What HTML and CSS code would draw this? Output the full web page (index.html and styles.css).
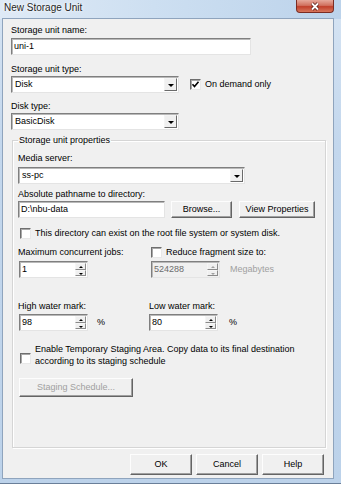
FILE: index.html
```html
<!DOCTYPE html>
<html>
<head>
    <title>New Storage Unit</title>
    <link rel="stylesheet" href="styles.css">
</head>
<body>
    <div class="window">
        <div class="titlebar">
            <span class="title">New Storage Unit</span>
            <span class="close-btn">
                <svg width="12" height="9" viewBox="0 0 12 9"><path class="x-shadow" d="M3 1.5 L9 7.5 M9 1.5 L3 7.5"/><path class="x-mark" d="M3 1.5 L9 7.5 M9 1.5 L3 7.5"/></svg>
            </span>
        </div>
        <div class="client">
            <div class="label">Storage unit name:</div>
            <div class="textbox name-box">uni-1</div>

            <div class="label label-gap">Storage unit type:</div>
            <div class="row field">
                <div class="combo short-combo"><span class="combo-text">Disk</span><span class="drop"></span></div>
                <div class="check demand-check">
                    <span class="box"><svg width="9" height="9" viewBox="0 0 9 9"><path d="M1.5 4.2 L3.5 6.5 L7.5 1.8"/></svg></span>
                    <span>On demand only</span>
                </div>
            </div>

            <div class="label label-gap2">Disk type:</div>
            <div class="combo short-combo field"><span class="combo-text">BasicDisk</span><span class="drop"></span></div>

            <fieldset class="group">
                <legend>Storage unit properties</legend>

                <div class="label">Media server:</div>
                <div class="combo server-combo"><span class="combo-text">ss-pc</span><span class="drop"></span></div>

                <div class="label path-label">Absolute pathname to directory:</div>
                <div class="row field">
                    <div class="textbox path-box">D:\nbu-data</div>
                    <div class="button browse-btn">Browse...</div>
                    <div class="button props-btn">View Properties</div>
                </div>

                <div class="check root-check">
                    <span class="box"></span>
                    <span>This directory can exist on the root file system or system disk.</span>
                </div>

                <div class="pair jobs-pair">
                    <div>
                        <div class="label">Maximum concurrent jobs:</div>
                        <div class="spin spin-gap">
                            <span class="spin-text">1</span>
                            <span class="spin-btns"><span class="spin-up"></span><span class="spin-down"></span></span>
                        </div>
                    </div>
                    <div>
                        <div class="check fragment-check">
                            <span class="box"></span>
                            <span>Reduce fragment size to:</span>
                        </div>
                        <div class="row spin-gap">
                            <div class="spin disabled">
                                <span class="spin-text">524288</span>
                                <span class="spin-btns"><span class="spin-up"></span><span class="spin-down"></span></span>
                            </div>
                            <span class="unit muted">Megabytes</span>
                        </div>
                    </div>
                </div>

                <div class="pair water-pair">
                    <div>
                        <div class="label">High water mark:</div>
                        <div class="row water-gap">
                            <div class="spin">
                                <span class="spin-text">98</span>
                                <span class="spin-btns"><span class="spin-up"></span><span class="spin-down"></span></span>
                            </div>
                            <span class="unit high-unit">%</span>
                        </div>
                    </div>
                    <div>
                        <div class="label">Low water mark:</div>
                        <div class="row water-gap">
                            <div class="spin low-spin">
                                <span class="spin-text">80</span>
                                <span class="spin-btns"><span class="spin-up"></span><span class="spin-down"></span></span>
                            </div>
                            <span class="unit low-unit">%</span>
                        </div>
                    </div>
                </div>

                <div class="check staging-check">
                    <span class="box"></span>
                    <span>Enable Temporary Staging Area. Copy data to its final destination<br>according to its staging schedule</span>
                </div>

                <div class="button staging-btn disabled">Staging Schedule...</div>
            </fieldset>

            <div class="actions">
                <div class="button action-btn">OK</div>
                <div class="button action-btn">Cancel</div>
                <div class="button action-btn">Help</div>
            </div>
        </div>
    </div>
</body>
</html>
```

FILE: styles.css
```css
body {
    margin: 0;
    font-family: "Liberation Sans", Arial, sans-serif;
    font-size: 9px;
    color: #000;
    background: #fff;
}
.window {
    width: 341px;
    height: 484px;
    display: flex;
    flex-direction: column;
    background: linear-gradient(to bottom, #d6e4f3, #c3d7ed 30%, #bcd2ea);
    box-shadow: inset 0 -3px 0 -2px #6a7f99;
}
.titlebar {
    height: 19px;
    flex: none;
    display: flex;
    justify-content: space-between;
    align-items: flex-start;
    padding-left: 4px;
    background: linear-gradient(to right, #dfeaf6, #cddff1 45%, #bcd3eb);
}
.title {
    font-size: 10px;
    line-height: 15px;
    color: #1e1e1e;
    text-shadow: 0 0 4px #fff, 0 0 2px #fff;
}
.close-btn {
    width: 38px;
    height: 13px;
    margin-right: 7px;
    box-sizing: border-box;
    border: 1px solid #7b2c22;
    border-top: none;
    border-radius: 0 0 4px 4px;
    background: linear-gradient(to bottom, #e6a99b, #d1715f 45%, #c1402b 55%, #d7765c);
    display: flex;
    align-items: center;
    justify-content: center;
}
.close-btn svg { display: block; }
.x-shadow { stroke: #5a2018; stroke-width: 3.4; fill: none; }
.x-mark { stroke: #fff; stroke-width: 1.8; fill: none; }
.client {
    flex: 1;
    margin: 0 8px 6px 3px;
    padding: 6px 7px 3px 8px;
    background: #f0f0f0;
    box-shadow: 0 0 0 1px #8fa4bd;
    display: flex;
    flex-direction: column;
    align-items: flex-start;
}
.label {
    line-height: 11px;
    white-space: nowrap;
}
.label-gap { margin-top: 9px; }
.label-gap2 { margin-top: 8px; }
.field { margin-top: 1px; }
.row {
    display: flex;
    align-items: center;
}

/* controls */
.textbox, .combo, .spin {
    box-sizing: border-box;
    height: 17px;
    background: #fff;
    border: 1px solid;
    border-color: #7f7f7f #e4e4e4 #e4e4e4 #7f7f7f;
    box-shadow: inset 1px 1px 0 #b9b9b9;
    line-height: 15px;
    white-space: nowrap;
}
.textbox { padding-left: 2px; }
.name-box { width: 240px; margin-top: 2px; }
.path-box { width: 147px; }
.combo {
    display: flex;
    justify-content: space-between;
    padding: 1px;
    line-height: 13px;
}
.combo-text { padding-left: 2px; }
.short-combo { width: 168px; }
.server-combo { width: 227px; margin-top: 3px; }
.drop {
    width: 13px;
    box-sizing: border-box;
    background: #f0f0f0;
    border: 1px solid;
    border-color: #f4f4f4 #6a6a6a #6a6a6a #f4f4f4;
    position: relative;
}
.drop::after {
    content: "";
    position: absolute;
    left: 3px;
    top: 5px;
    border-left: 3px solid transparent;
    border-right: 3px solid transparent;
    border-top: 3px solid #000;
}
.button {
    box-sizing: border-box;
    height: 17px;
    background: #f0f0f0;
    border: 1px solid;
    border-color: #fdfdfd #646464 #646464 #fdfdfd;
    box-shadow: inset -1px -1px 0 #a0a0a0;
    text-align: center;
    line-height: 15px;
    white-space: nowrap;
}
.browse-btn { width: 61px; margin-left: 6px; }
.props-btn { width: 76px; margin-left: 7px; }

/* checkboxes */
.check {
    display: flex;
    align-items: center;
    line-height: 11px;
    white-space: nowrap;
}
.box {
    width: 11px;
    height: 11px;
    box-sizing: border-box;
    flex: none;
    margin-right: 4px;
    background: #fff;
    border: 1px solid;
    border-color: #6e6e6e #e8e8e8 #e8e8e8 #6e6e6e;
    box-shadow: inset 1px 1px 0 #a8a8a8;
    display: flex;
    align-items: center;
    justify-content: center;
}
.box svg path { stroke: #000; stroke-width: 1.6; fill: none; }
.demand-check { margin-left: 11px; }
.root-check { margin-top: 10px; margin-left: 2px; }
.fragment-check { margin-left: 1px; }
.staging-check {
    margin-top: 12px;
    margin-left: 2px;
    align-items: flex-start;
    line-height: 12px;
}
.staging-check .box { margin-top: 10px; }

/* group */
.group {
    margin: 5px 0 0 1px;
    padding: 7px 0 50px 5px;
    border: 1px solid #d5d5d5;
    box-shadow: inset 1px 1px 0 #fff, 1px 1px 0 #fff;
    align-self: stretch;
    display: flex;
    flex-direction: column;
    align-items: flex-start;
    min-width: 0;
}
.group legend {
    padding: 0 1px;
    line-height: 11px;
}
.path-label { margin-top: 5px; }

.pair {
    display: grid;
    grid-template-columns: 132px auto;
    margin-top: 8px;
}
.water-pair {
    grid-template-columns: 131px auto;
    margin-top: 23px;
}
.spin {
    width: 69px;
    display: flex;
    justify-content: space-between;
    padding: 0 1px 0 0;
    margin-left: 1px;
}
.low-spin { margin-left: 0; }
.spin-gap { margin-top: 3px; }
.water-gap { margin-top: 2px; }
.spin-text { padding-left: 2px; }
.spin-btns {
    width: 11px;
    display: flex;
    flex-direction: column;
    padding: 1px 0;
}
.spin-up, .spin-down {
    flex: 1;
    background: #f0f0f0;
    border: 1px solid;
    border-color: #f6f6f6 #8a8a8a #8a8a8a #f6f6f6;
    position: relative;
}
.spin-up::after, .spin-down::after {
    content: "";
    position: absolute;
    left: 3px;
    top: 2px;
    border-left: 2px solid transparent;
    border-right: 2px solid transparent;
}
.spin-up::after { border-bottom: 2px solid #000; }
.spin-down::after { border-top: 2px solid #000; }
.spin.disabled { background: #f0f0f0; color: #6d6d6d; }
.spin.disabled .spin-up::after { border-bottom-color: #a0a0a0; }
.spin.disabled .spin-down::after { border-top-color: #a0a0a0; }
.unit { line-height: 11px; }
.muted { color: #a0a0a0; margin-left: 10px; }
.high-unit { margin-left: 9px; }
.low-unit { margin-left: 11px; }

.staging-btn {
    width: 114px;
    height: 19px;
    line-height: 17px;
    margin-top: 11px;
    margin-left: 1px;
}
.button.disabled { color: #a0a0a0; }

.actions {
    display: flex;
    gap: 4px;
    margin-top: 6px;
    align-self: flex-end;
    margin-right: 2px;
}
.action-btn {
    width: 62px;
    height: 21px;
    line-height: 19px;
}
```
